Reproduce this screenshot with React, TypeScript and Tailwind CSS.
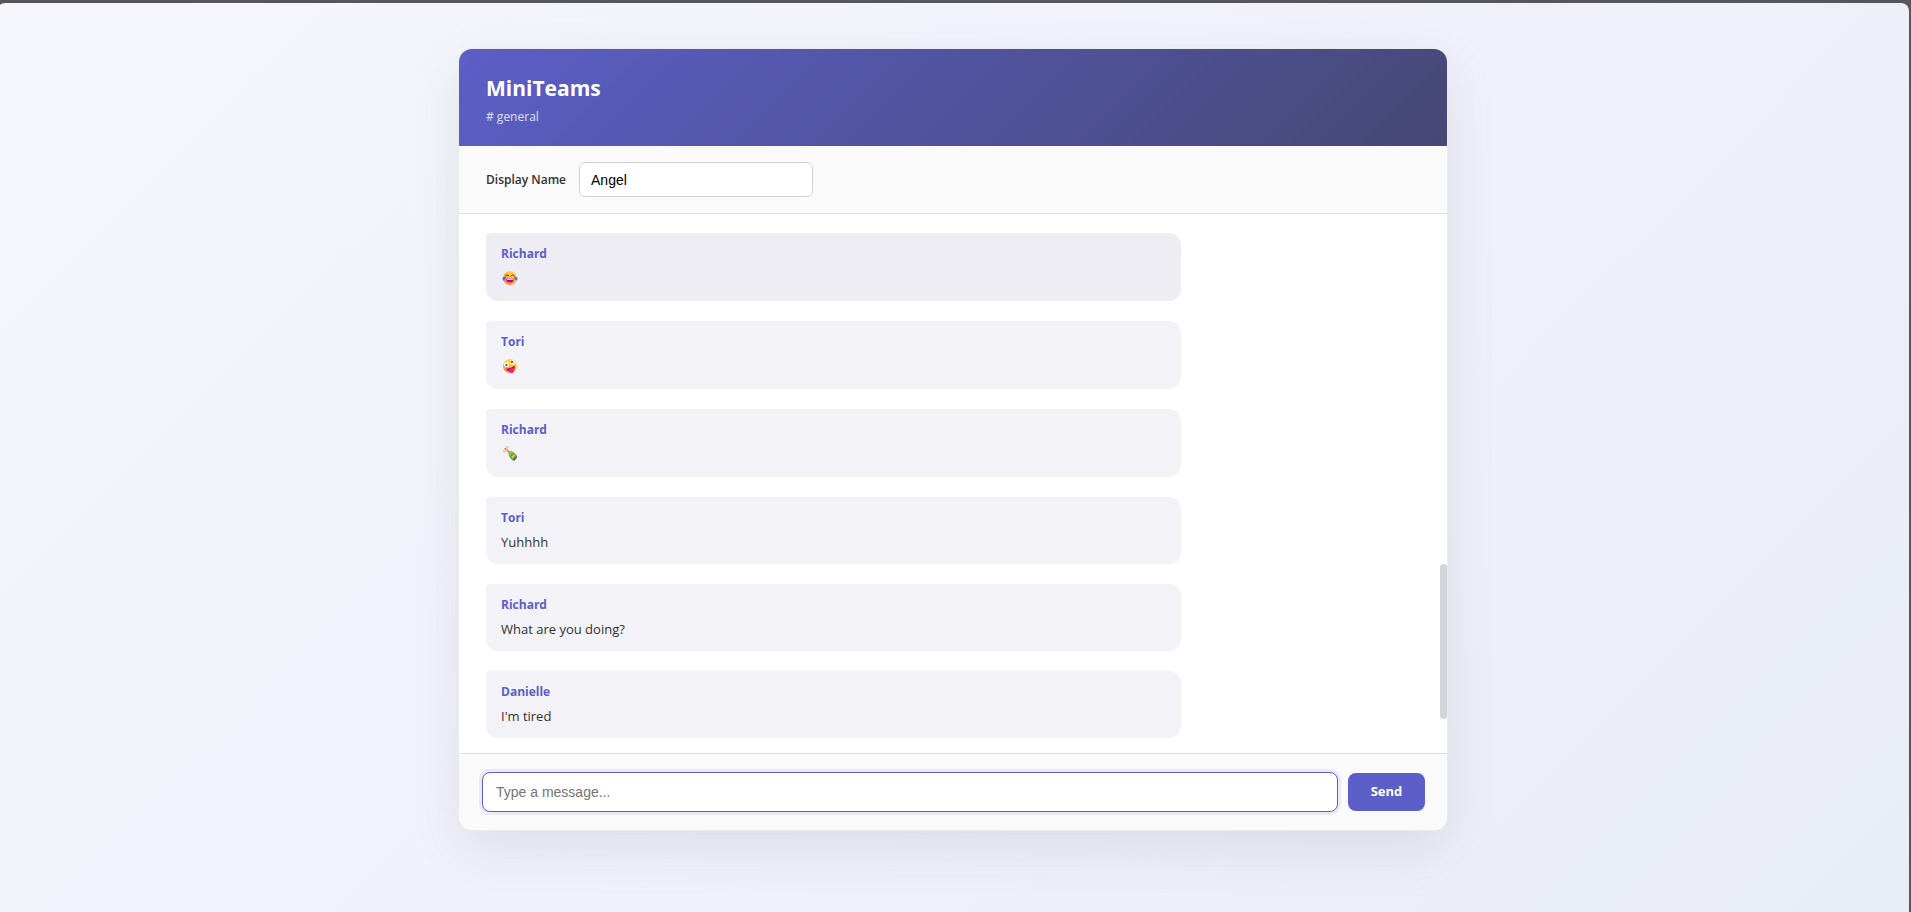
import { useState } from "react";

type Message = {
  id: number;
  author: string;
  text?: string;
  emoji?: "joy" | "zany" | "bottle";
  active?: boolean;
};

const messages: Message[] = [
  { id: 1, author: "Richard", emoji: "joy", active: true },
  { id: 2, author: "Tori", emoji: "zany" },
  { id: 3, author: "Richard", emoji: "bottle" },
  { id: 4, author: "Tori", text: "Yuhhhh" },
  { id: 5, author: "Richard", text: "What are you doing?" },
  { id: 6, author: "Danielle", text: "I'm tired" },
];

function Joy() {
  return (
    <svg viewBox="0 0 32 32" className="h-4 w-4" role="img" aria-label="Face with tears of joy">
      <defs>
        <linearGradient id="joy-face" x1="1" y1="0" x2="0.2" y2="1">
          <stop offset="0" stopColor="#ffe84a" />
          <stop offset="0.5" stopColor="#ffb93a" />
          <stop offset="1" stopColor="#f4774e" />
        </linearGradient>
      </defs>
      <circle cx="16" cy="16" r="14" fill="url(#joy-face)" />
      <path d="M7 12c1-3 6-3 7 0M18 12c1-3 6-3 7 0" fill="none" stroke="#523a25" strokeWidth="2" strokeLinecap="round" />
      <path d="M8 17h16c0 5-3 8-8 8s-8-3-8-8z" fill="#b3047c" />
      <path d="M9 17h14v2c0 1-14 1-14 0z" fill="#f7dce8" />
      <path d="M8 14c-4-1-8 1-7 5 1 3 6 3 7-5zM24 14c4-1 8 1 7 5-1 3-6 3-7-5z" fill="#3f7cf0" />
    </svg>
  );
}

function Zany() {
  return (
    <svg viewBox="0 0 32 32" className="h-4 w-4" role="img" aria-label="Zany face">
      <defs>
        <linearGradient id="zany-face" x1="0.8" y1="0" x2="0.2" y2="1">
          <stop offset="0" stopColor="#ffe84a" />
          <stop offset="0.5" stopColor="#ffbe38" />
          <stop offset="1" stopColor="#f4774e" />
        </linearGradient>
      </defs>
      <circle cx="16" cy="16" r="14" fill="url(#zany-face)" />
      <circle cx="9" cy="13" r="5" fill="#fff" />
      <circle cx="21" cy="9" r="4" fill="#fff" />
      <circle cx="9" cy="14" r="2" fill="#402a32" />
      <circle cx="20" cy="8" r="2" fill="#402a32" />
      <path d="M8 21c6 0 12-2 17-6 2 6-1 11-6 12-5 1-9-1-11-6z" fill="#a5147d" />
      <path d="M14 23c3-2 7-3 9-3 3 4 1 9-3 10-4 0-6-3-6-7z" fill="#fb1f6e" />
    </svg>
  );
}

function Bottle() {
  return (
    <svg viewBox="0 0 32 32" className="h-4 w-4" role="img" aria-label="Bottle with popping cork">
      <path d="M8 9l3-3 7 6-4 4z" fill="#e3a45b" />
      <path d="M13 15l5-5c5 2 9 6 12 10 1 3-5 10-8 9-5-3-8-8-9-14z" fill="#5c9a3a" />
      <path d="M14 14l4-4c3 1 5 2 7 4-5 0-7 3-8 7-2-2-3-4-3-7z" fill="#8dc455" />
      <path d="M18 22l6-6 3 3-6 7z" fill="#e0b964" />
      <path d="M22 29l7-8 1 2-5 6z" fill="#31692f" />
      <path d="M4 5l4-2 2 3-3 3z" fill="#c99468" />
      <path d="M2 9l2 1M9 1l2 1M4 12l3-2M11 4l2-2" stroke="#eea69a" strokeWidth="2" strokeLinecap="round" />
    </svg>
  );
}

const emojis = {
  joy: <Joy />,
  zany: <Zany />,
  bottle: <Bottle />,
};

function MessageBubble({ message }: { message: Message }) {
  return (
    <li
      className={`w-3/4 rounded-xl rounded-tl-sm px-[15px] py-3 ${
        message.active ? "bg-[#eeedf4]" : "bg-[#f3f2f7]"
      }`}
    >
      <p className="text-[12px] leading-[18px] font-bold text-[#5b5fc7]">{message.author}</p>
      {message.emoji ? (
        <p className="flex h-[26px] items-center pt-1 pl-px">{emojis[message.emoji]}</p>
      ) : (
        <p className="pt-[5px] text-[13px] leading-5 text-[#323130]">{message.text}</p>
      )}
    </li>
  );
}

export default function App() {
  const [name, setName] = useState("Angel");
  const [draft, setDraft] = useState("");

  return (
    <div className="min-h-screen overflow-hidden bg-[#57575b] pt-[3px] font-['Open_Sans','Noto_Sans',sans-serif]">
      <div className="mr-[2px] -ml-[3px] flex min-h-[calc(100vh-3px)] items-start justify-center rounded-t-lg bg-linear-135 from-[#f5f7fb] via-[#f0f1fb] to-[#e9edf6] pt-[45px] pb-12">
        <main className="w-full max-w-[990px] overflow-hidden rounded-[14px] border border-black/8 bg-white shadow-[0_18px_54px_rgba(0,0,0,0.08)]">
          {/* Header */}
          <header className="bg-linear-135 from-[#5b5fc7] to-[#464775] px-[27px] pt-6 pb-[19px] text-white">
            <h1 className="text-[21px] leading-[30px] font-bold">MiniTeams</h1>
            <p className="mt-1 text-[12px] leading-5 text-white/80"># general</p>
          </header>

          {/* Display name */}
          <div className="flex items-center gap-[13px] border-b border-[#e1dfe3] bg-[#fafafa] px-[27px] py-4">
            <label htmlFor="display-name" className="text-[12px] font-semibold text-[#323130]">
              Display Name
            </label>
            <input
              id="display-name"
              value={name}
              onChange={(e) => setName(e.target.value)}
              className="h-[35px] w-[234px] rounded-md border border-[#d1d1db] bg-white px-[11px] font-['Liberation_Sans',Arial,sans-serif] text-[14px] text-black outline-none"
            />
          </div>

          {/* Messages */}
          <div className="relative">
            <ul className="flex flex-col gap-5 pt-[19px] pr-[34px] pb-[15px] pl-[27px]">
              {messages.map((message) => (
                <MessageBubble key={message.id} message={message} />
              ))}
            </ul>
            <div className="absolute top-[65%] right-0 h-[155px] w-[7px] rounded-full bg-[#d4d4da]" />
          </div>

          {/* Composer */}
          <form
            className="flex items-center gap-[10px] border-t border-[#e1dfe3] bg-[#fafafa] py-[18px] pr-[22px] pl-[23px]"
            onSubmit={(e) => e.preventDefault()}
          >
            <input
              aria-label="Message"
              placeholder="Type a message..."
              value={draft}
              onChange={(e) => setDraft(e.target.value)}
              className="h-10 min-w-0 flex-1 rounded-lg border border-[#5b5fc7] bg-white px-[13px] font-['Liberation_Sans',Arial,sans-serif] text-[14px] text-black ring-3 ring-[#5b5fc7]/10 outline-none placeholder:text-[#757575]"
            />
            <button type="submit" className="h-[38px] w-[77px] rounded-lg bg-[#5b5fc7] text-[13px] font-bold text-white">
              Send
            </button>
          </form>
        </main>
      </div>
    </div>
  );
}
